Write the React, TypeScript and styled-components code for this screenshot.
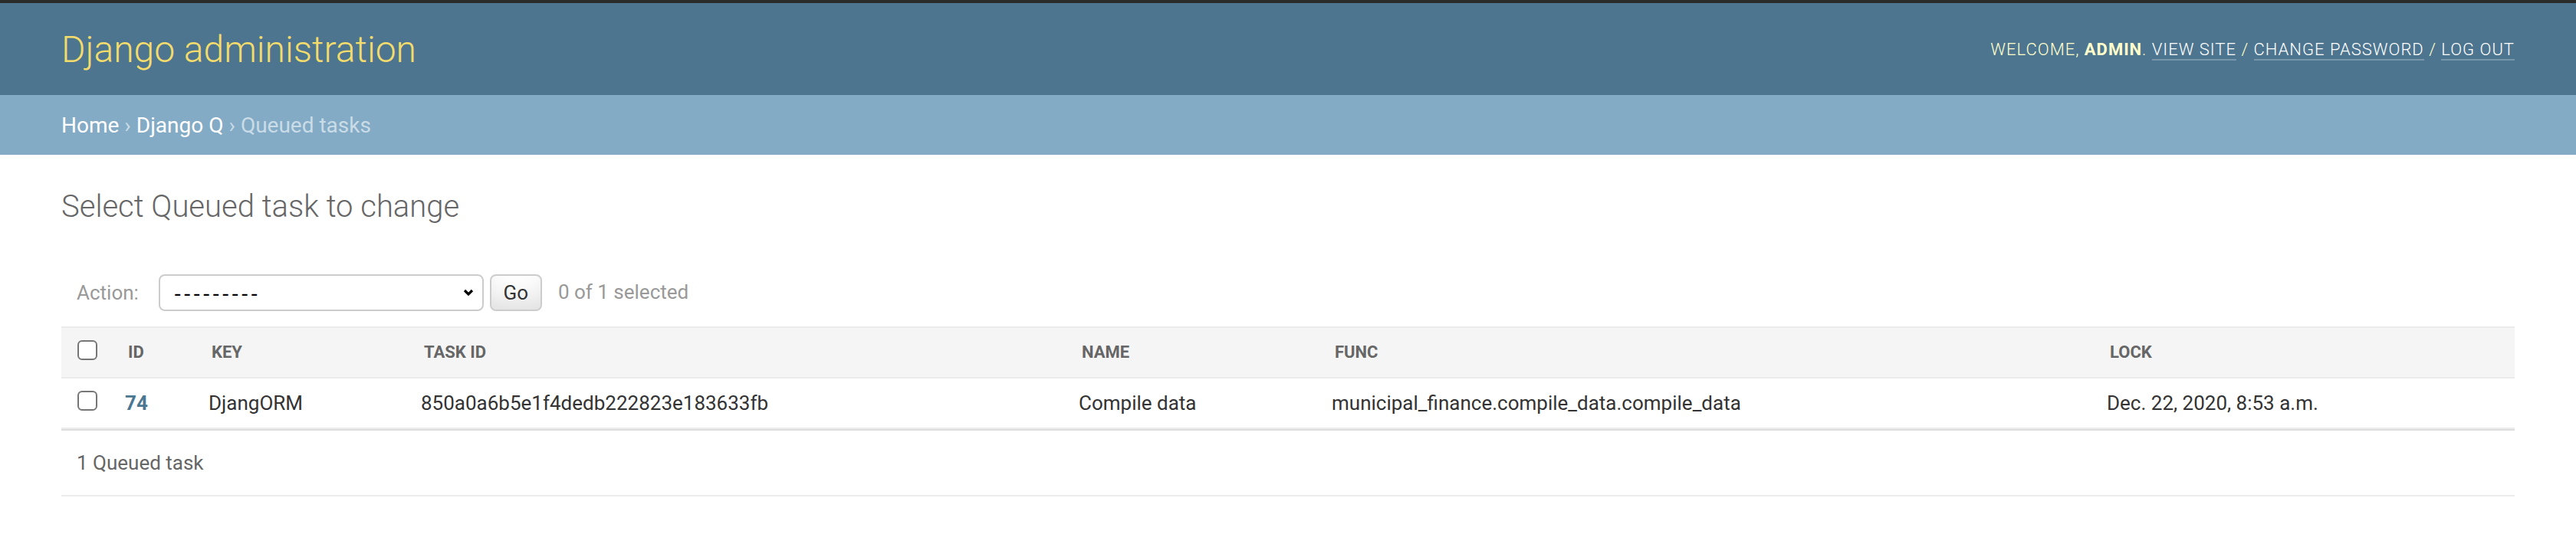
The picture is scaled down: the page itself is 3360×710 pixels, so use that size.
import React from 'react';
import styled, { createGlobalStyle } from 'styled-components';

const GlobalStyle = createGlobalStyle`
  html, body {
    margin: 0;
    padding: 0;
    background: #fff;
  }
  body {
    font-family: Roboto, "Liberation Sans", sans-serif;
    font-size: 28px;
    color: #333;
  }
`;

const TopStrip = styled.div`
  height: 4px;
  background: #2b2b2b;
`;

const Header = styled.header`
  height: 120px;
  box-sizing: border-box;
  padding: 0 80px;
  display: flex;
  align-items: center;
  justify-content: space-between;
  background: #4d758f;
  color: #ffc;
`;

const Branding = styled.h1`
  margin: 0;
  font-size: 48px;
  font-weight: 300;
  color: #f3dc6c;
`;

const UserTools = styled.div`
  font-size: 22px;
  font-weight: 300;
  letter-spacing: 1px;
  text-transform: uppercase;
  color: #ffc;
  strong {
    font-weight: 700;
  }
`;

const ToolLink = styled.a`
  color: #fff;
  text-decoration: none;
  border-bottom: 2px solid rgba(255, 255, 255, 0.25);
`;

const Breadcrumbs = styled.nav`
  height: 78px;
  box-sizing: border-box;
  padding: 0 80px;
  display: flex;
  align-items: center;
  background: #84abc5;
  color: #c9dce7;
  font-size: 28px;
`;

const Crumb = styled.a`
  color: #fff;
  text-decoration: none;
`;

const Sep = styled.span`
  margin: 0 7px;
`;

const Content = styled.main`
  padding: 44px 80px 40px;
`;

const Title = styled.h1`
  margin: 0 0 40px;
  font-size: 40px;
  font-weight: 300;
  color: #666;
`;

const Actions = styled.div`
  display: flex;
  align-items: center;
  height: 48px;
  padding: 25px 20px 20px;
  color: #999;
  font-size: 26px;
`;

const ActionLabel = styled.label`
  margin-right: 26px;
  color: #999;
`;

const SelectWrap = styled.div`
  position: relative;
  width: 424px;
  height: 48px;
`;

const Select = styled.select`
  appearance: none;
  width: 100%;
  height: 100%;
  box-sizing: border-box;
  border: 2px solid #ccc;
  border-radius: 8px;
  background: #fff;
  color: #000;
  padding: 0 0 0 18px;
  font-family: "Liberation Sans", sans-serif;
  font-size: 28px;
  letter-spacing: 3.2px;
`;

const Chevron = styled.svg`
  position: absolute;
  right: 13px;
  top: 19px;
  pointer-events: none;
`;

const GoButton = styled.button`
  margin-left: 8px;
  width: 68px;
  height: 48px;
  box-sizing: border-box;
  border: 2px solid #ccc;
  border-radius: 8px;
  background: #fff;
  box-shadow: 0 -30px 40px -20px rgba(0, 0, 0, 0.15) inset;
  color: #333;
  font-family: Roboto, "Liberation Sans", sans-serif;
  font-size: 26px;
  padding: 0;
`;

const Counter = styled.span`
  margin-left: 21px;
  margin-top: -2px;
`;

const Table = styled.table`
  width: 100%;
  table-layout: fixed;
  border-collapse: collapse;
`;

const Th = styled.th<{ $center?: boolean }>`
  height: 64px;
  box-sizing: border-box;
  padding: 16px ${p => (p.$center ? '0' : '20px')};
  text-align: ${p => (p.$center ? 'center' : 'left')};
  vertical-align: top;
  background: #f5f5f5;
  border-top: 2px solid #ececec;
  border-bottom: 2px solid #ececec;
  color: #666;
  font-size: 22px;
  font-weight: 700;
  line-height: 32px;
  text-transform: uppercase;
  white-space: nowrap;
`;

const Td = styled.td<{ $center?: boolean }>`
  padding: 16px ${p => (p.$center ? '0' : '16px')};
  text-align: ${p => (p.$center ? 'center' : 'left')};
  vertical-align: top;
  border-bottom: 2px solid #ececec;
  font-size: 26px;
  line-height: 32px;
  color: #333;
  white-space: nowrap;
`;

const IdCell = styled(Td).attrs({ as: 'th' })`
  font-weight: 700;
`;

const IdLink = styled.a`
  color: #4a7792;
  text-decoration: none;
`;

const CheckBox = styled.input.attrs({ type: 'checkbox' })`
  appearance: none;
  display: block;
  margin: 0 auto;
  width: 26px;
  height: 26px;
  box-sizing: border-box;
  border: 2px solid #767676;
  border-radius: 6px;
  background: #fff;
`;

const Paginator = styled.p`
  margin: 0;
  padding: 20px;
  line-height: 44px;
  font-size: 26px;
  color: #666;
  border-top: 2px solid #ddd;
  border-bottom: 2px solid #ececec;
`;

const columns = [
  { label: 'ID', width: 109 },
  { label: 'Key', width: 277 },
  { label: 'Task ID', width: 858 },
  { label: 'Name', width: 330 },
  { label: 'Func', width: 1011 },
  { label: 'Lock', width: 548 },
];

const task = {
  id: 74,
  key: 'DjangORM',
  taskId: '850a0a6b5e1f4dedb222823e183633fb',
  name: 'Compile data',
  func: 'municipal_finance.compile_data.compile_data',
  lock: 'Dec. 22, 2020, 8:53 a.m.',
};

export default function App() {
  return (
    <>
      <GlobalStyle />
      <TopStrip />
      <Header>
        <Branding>Django administration</Branding>
        <UserTools>
          Welcome, <strong>admin</strong>. <ToolLink href="#">View site</ToolLink> /{' '}
          <ToolLink href="#">Change password</ToolLink> / <ToolLink href="#">Log out</ToolLink>
        </UserTools>
      </Header>
      <Breadcrumbs>
        <Crumb href="#">Home</Crumb>
        <Sep>›</Sep>
        <Crumb href="#">Django Q</Crumb>
        <Sep>›</Sep>
        Queued tasks
      </Breadcrumbs>
      <Content>
        <Title>Select Queued task to change</Title>
        <Actions>
          <ActionLabel>Action:</ActionLabel>
          <SelectWrap>
            <Select defaultValue="">
              <option value="">---------</option>
              <option value="delete_selected">Delete selected queued tasks</option>
            </Select>
            <Chevron width="14" height="10" viewBox="0 0 14 10">
              <path d="M2 2 L7 7 L12 2" fill="none" stroke="#000" strokeWidth="3.2" />
            </Chevron>
          </SelectWrap>
          <GoButton>Go</GoButton>
          <Counter>0 of 1 selected</Counter>
        </Actions>
        <Table>
          <colgroup>
            <col style={{ width: 67 }} />
            {columns.map(c => (
              <col key={c.label} style={{ width: c.width }} />
            ))}
          </colgroup>
          <thead>
            <tr>
              <Th $center>
                <CheckBox />
              </Th>
              {columns.map(c => (
                <Th key={c.label}>{c.label}</Th>
              ))}
            </tr>
          </thead>
          <tbody>
            <tr>
              <Td $center>
                <CheckBox />
              </Td>
              <IdCell>
                <IdLink href="#">{task.id}</IdLink>
              </IdCell>
              <Td>{task.key}</Td>
              <Td>{task.taskId}</Td>
              <Td>{task.name}</Td>
              <Td>{task.func}</Td>
              <Td>{task.lock}</Td>
            </tr>
          </tbody>
        </Table>
        <Paginator>1 Queued task</Paginator>
      </Content>
    </>
  );
}
